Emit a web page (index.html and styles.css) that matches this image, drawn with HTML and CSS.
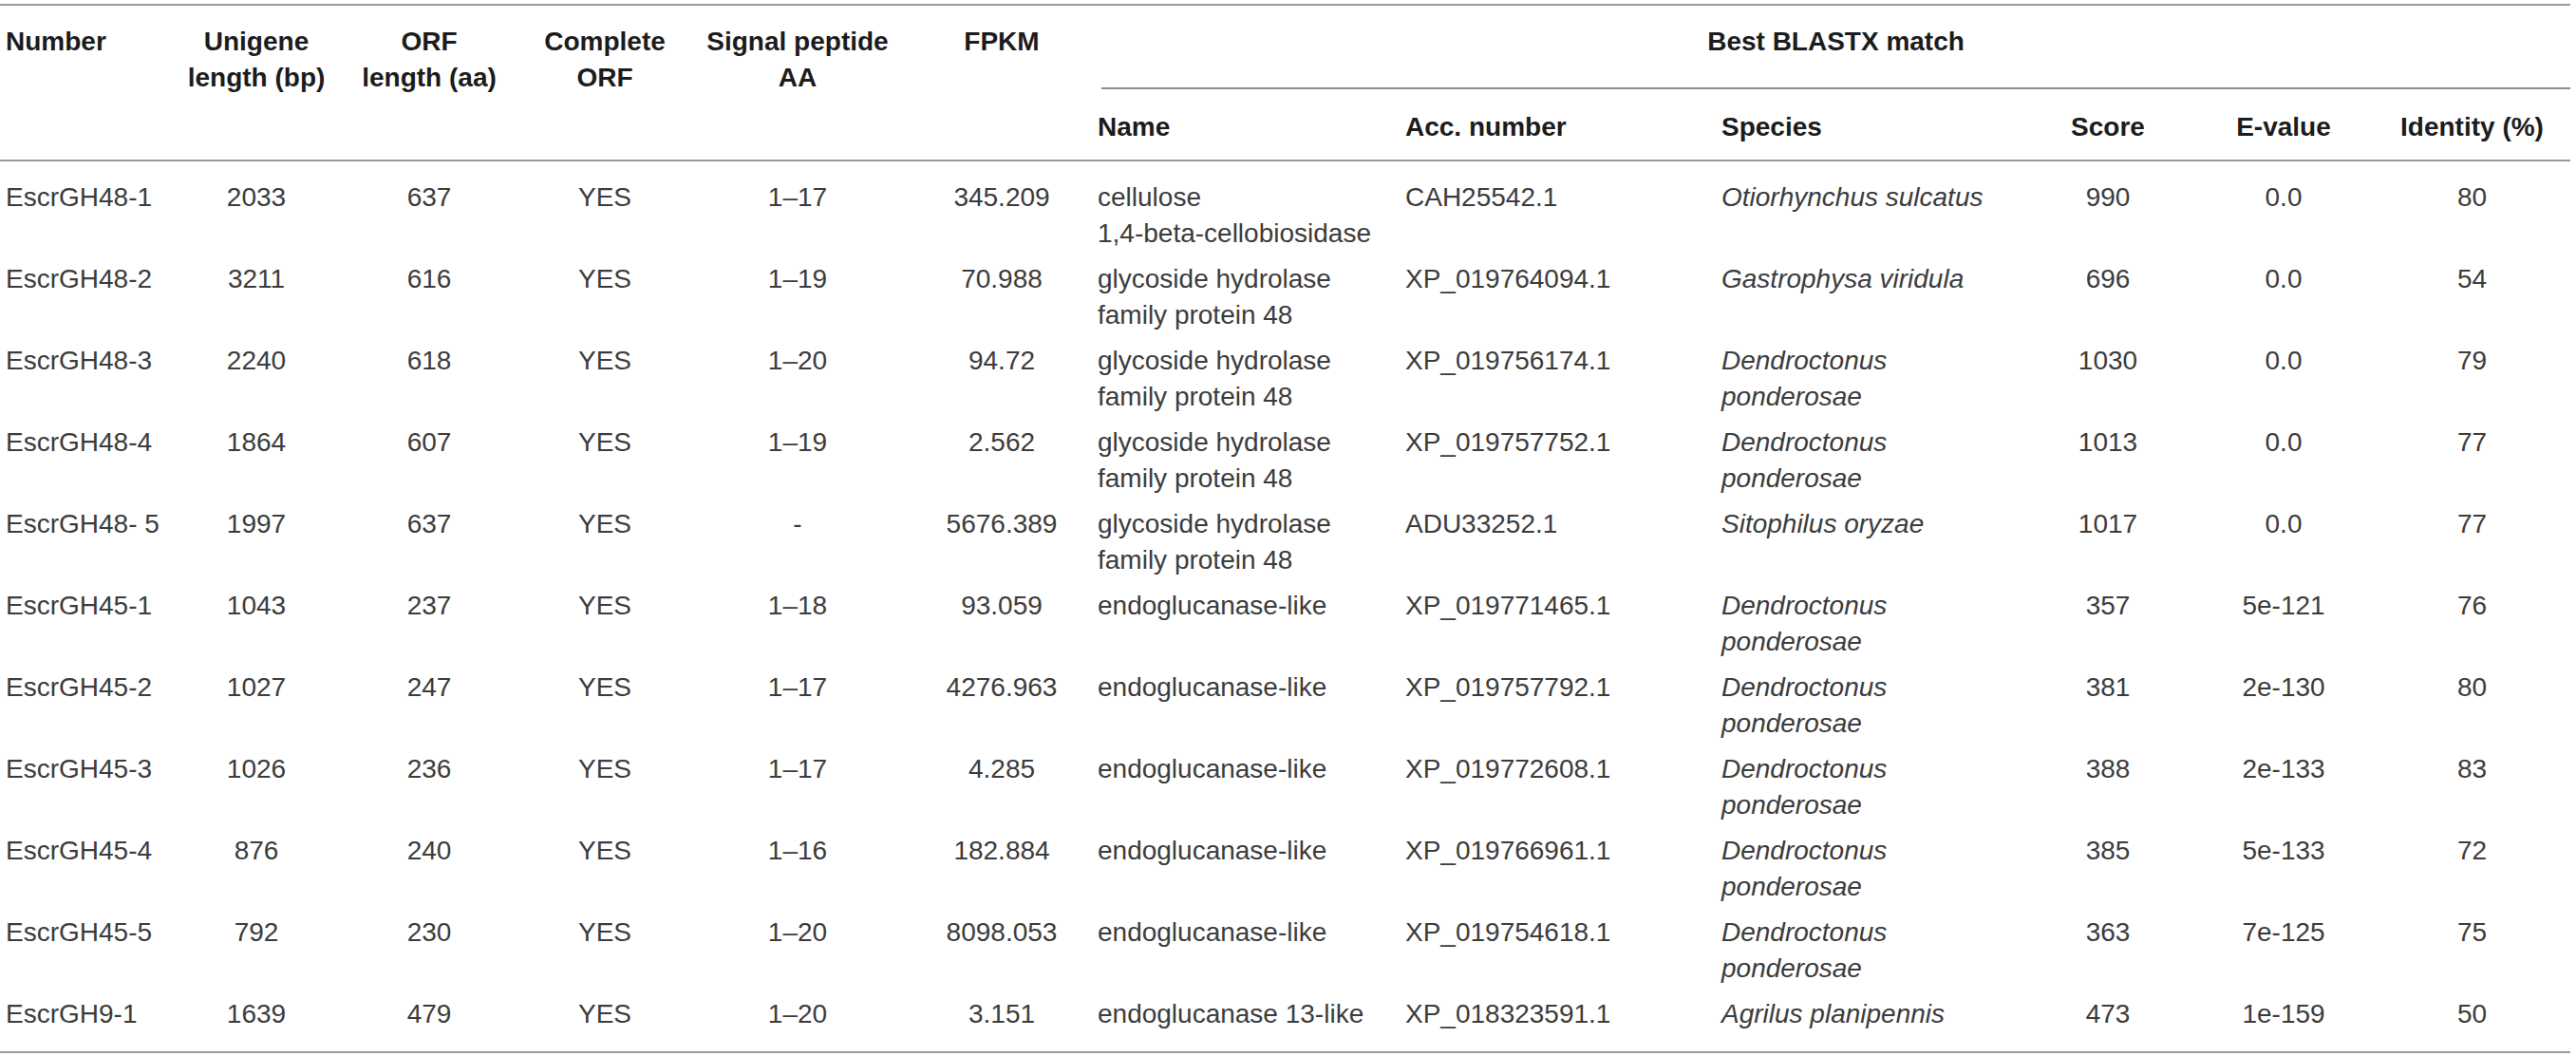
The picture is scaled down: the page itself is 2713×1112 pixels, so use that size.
FILE: index.html
```html
<!DOCTYPE html>
<html lang="en">
<head>
<meta charset="utf-8">
<title>BLASTX table</title>
<link rel="stylesheet" href="styles.css">
</head>
<body>
<table class="data-table">
  <colgroup>
    <col class="w-num"><col class="w-uni"><col class="w-orf"><col class="w-comp"><col class="w-sig"><col class="w-fpkm">
    <col class="w-name"><col class="w-acc"><col class="w-spec"><col class="w-score"><col class="w-eval"><col class="w-ident">
  </colgroup>
  <thead>
    <tr class="top">
      <th rowspan="2" class="rs l">Number</th>
      <th rowspan="2" class="rs c">Unigene<br>length (bp)</th>
      <th rowspan="2" class="rs c">ORF<br>length (aa)</th>
      <th rowspan="2" class="rs c">Complete<br>ORF</th>
      <th rowspan="2" class="rs c">Signal peptide<br>AA</th>
      <th rowspan="2" class="rs c">FPKM</th>
      <th colspan="6" class="group"><div class="group-inner">Best BLASTX match</div></th>
    </tr>
    <tr class="sub">
      <th class="l">Name</th>
      <th class="l">Acc. number</th>
      <th class="l">Species</th>
      <th class="c">Score</th>
      <th class="c">E-value</th>
      <th class="c">Identity (%)</th>
    </tr>
  </thead>
  <tbody>
    <tr class="first">
      <td class="l">EscrGH48-1</td><td class="c">2033</td><td class="c">637</td><td class="c">YES</td><td class="c">1–17</td><td class="c">345.209</td>
      <td class="l">cellulose<br>1,4-beta-cellobiosidase</td><td class="l">CAH25542.1</td><td class="l sp">Otiorhynchus sulcatus</td><td class="c">990</td><td class="c">0.0</td><td class="c">80</td>
    </tr>
    <tr>
      <td class="l">EscrGH48-2</td><td class="c">3211</td><td class="c">616</td><td class="c">YES</td><td class="c">1–19</td><td class="c">70.988</td>
      <td class="l">glycoside hydrolase<br>family protein 48</td><td class="l">XP_019764094.1</td><td class="l sp">Gastrophysa viridula</td><td class="c">696</td><td class="c">0.0</td><td class="c">54</td>
    </tr>
    <tr>
      <td class="l">EscrGH48-3</td><td class="c">2240</td><td class="c">618</td><td class="c">YES</td><td class="c">1–20</td><td class="c">94.72</td>
      <td class="l">glycoside hydrolase<br>family protein 48</td><td class="l">XP_019756174.1</td><td class="l sp">Dendroctonus<br>ponderosae</td><td class="c">1030</td><td class="c">0.0</td><td class="c">79</td>
    </tr>
    <tr>
      <td class="l">EscrGH48-4</td><td class="c">1864</td><td class="c">607</td><td class="c">YES</td><td class="c">1–19</td><td class="c">2.562</td>
      <td class="l">glycoside hydrolase<br>family protein 48</td><td class="l">XP_019757752.1</td><td class="l sp">Dendroctonus<br>ponderosae</td><td class="c">1013</td><td class="c">0.0</td><td class="c">77</td>
    </tr>
    <tr>
      <td class="l">EscrGH48- 5</td><td class="c">1997</td><td class="c">637</td><td class="c">YES</td><td class="c">-</td><td class="c">5676.389</td>
      <td class="l">glycoside hydrolase<br>family protein 48</td><td class="l">ADU33252.1</td><td class="l sp">Sitophilus oryzae</td><td class="c">1017</td><td class="c">0.0</td><td class="c">77</td>
    </tr>
    <tr>
      <td class="l">EscrGH45-1</td><td class="c">1043</td><td class="c">237</td><td class="c">YES</td><td class="c">1–18</td><td class="c">93.059</td>
      <td class="l">endoglucanase-like</td><td class="l">XP_019771465.1</td><td class="l sp">Dendroctonus<br>ponderosae</td><td class="c">357</td><td class="c">5e-121</td><td class="c">76</td>
    </tr>
    <tr>
      <td class="l">EscrGH45-2</td><td class="c">1027</td><td class="c">247</td><td class="c">YES</td><td class="c">1–17</td><td class="c">4276.963</td>
      <td class="l">endoglucanase-like</td><td class="l">XP_019757792.1</td><td class="l sp">Dendroctonus<br>ponderosae</td><td class="c">381</td><td class="c">2e-130</td><td class="c">80</td>
    </tr>
    <tr>
      <td class="l">EscrGH45-3</td><td class="c">1026</td><td class="c">236</td><td class="c">YES</td><td class="c">1–17</td><td class="c">4.285</td>
      <td class="l">endoglucanase-like</td><td class="l">XP_019772608.1</td><td class="l sp">Dendroctonus<br>ponderosae</td><td class="c">388</td><td class="c">2e-133</td><td class="c">83</td>
    </tr>
    <tr>
      <td class="l">EscrGH45-4</td><td class="c">876</td><td class="c">240</td><td class="c">YES</td><td class="c">1–16</td><td class="c">182.884</td>
      <td class="l">endoglucanase-like</td><td class="l">XP_019766961.1</td><td class="l sp">Dendroctonus<br>ponderosae</td><td class="c">385</td><td class="c">5e-133</td><td class="c">72</td>
    </tr>
    <tr>
      <td class="l">EscrGH45-5</td><td class="c">792</td><td class="c">230</td><td class="c">YES</td><td class="c">1–20</td><td class="c">8098.053</td>
      <td class="l">endoglucanase-like</td><td class="l">XP_019754618.1</td><td class="l sp">Dendroctonus<br>ponderosae</td><td class="c">363</td><td class="c">7e-125</td><td class="c">75</td>
    </tr>
    <tr class="last">
      <td class="l">EscrGH9-1</td><td class="c">1639</td><td class="c">479</td><td class="c">YES</td><td class="c">1–20</td><td class="c">3.151</td>
      <td class="l">endoglucanase 13-like</td><td class="l">XP_018323591.1</td><td class="l sp">Agrilus planipennis</td><td class="c">473</td><td class="c">1e-159</td><td class="c">50</td>
    </tr>
  </tbody>
</table>
</body>
</html>
```

FILE: styles.css
```css
html, body {
  margin: 0;
  padding: 0;
  background: #ffffff;
}

body {
  padding-top: 4px;
  font-family: "Liberation Sans", Arial, Helvetica, sans-serif;
}

.data-table {
  border-collapse: collapse;
  table-layout: fixed;
  width: 2707px;
  font-size: 28px;
  line-height: 38px;
  color: #3c3c3c;
  border-top: 2px solid #9a9a9a;
}

.w-num { width: 190px; }
.w-uni { width: 160px; }
.w-orf { width: 204px; }
.w-comp { width: 166px; }
.w-sig { width: 240px; }
.w-fpkm { width: 190px; }
.w-name { width: 324px; }
.w-acc { width: 333px; }
.w-spec { width: 323px; }
.w-score { width: 180px; }
.w-eval { width: 190px; }
.w-ident { width: 207px; }

.data-table th {
  font-weight: bold;
  color: #1c1c1c;
  vertical-align: top;
  padding: 19px 6px 15px;
  white-space: nowrap;
}

.data-table th.rs {
  border-bottom: 2px solid #9a9a9a;
}

.data-table .sub th {
  padding-top: 21px;
  border-bottom: 2px solid #9a9a9a;
}

.data-table th.group {
  padding: 0;
}

.group-inner {
  margin-left: 10px;
  padding: 19px 0 29px;
  border-bottom: 2px solid #8c8c8c;
  text-align: center;
}

.data-table td {
  padding: 5px 6px;
  vertical-align: top;
  white-space: nowrap;
}

.data-table .first td {
  padding-top: 19px;
}

.data-table .last td {
  padding-bottom: 20px;
  border-bottom: 2px solid #9a9a9a;
}

.l { text-align: left; }
.c { text-align: center; }
.sp { font-style: italic; }
```
